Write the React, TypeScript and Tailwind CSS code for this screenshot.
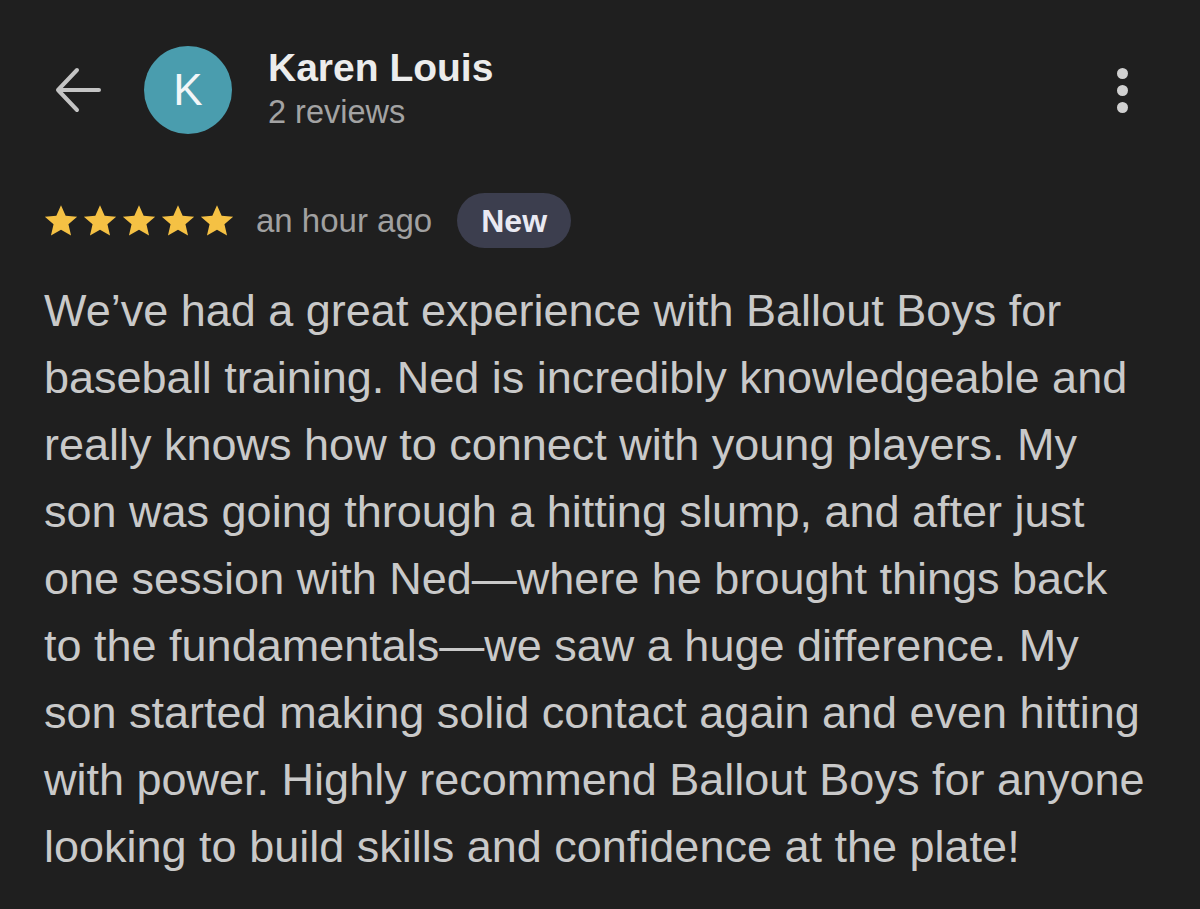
const reviewText =
  'We\u2019ve had a great experience with Ballout Boys for baseball training. Ned is incredibly knowledgeable and really knows how to connect with young players. My son was going through a hitting slump, and after just one session with Ned\u2014where he brought things back to the fundamentals\u2014we saw a huge difference. My son started making solid contact again and even hitting with power. Highly recommend Ballout Boys for anyone looking to build skills and confidence at the plate!';

function Star() {
  return (
    <svg className="w-[38px] h-[38px]" viewBox="0 0 24 24" fill="#f5c144">
      <path d="M12 2l2.95 6.7 7.25.62-5.5 4.78 1.65 7.1L12 17.45 5.65 21.2l1.65-7.1L1.8 9.32l7.25-.62z" />
    </svg>
  );
}

function BackArrow() {
  return (
    <svg className="w-[48px] h-[48px]" viewBox="0 0 48 48" fill="none" stroke="#c4c4c4" strokeWidth={4} strokeLinecap="round" strokeLinejoin="round">
      <path d="M45 24H4M23 4L4 24l19 20" />
    </svg>
  );
}

export default function App() {
  return (
    <div
      className="min-h-screen w-[1200px] h-[909px] bg-[#1f1f1f] overflow-hidden"
      style={{ fontFamily: '"Liberation Sans", Arial, sans-serif' }}
    >
      {/* Header */}
      <div className="flex items-center pl-[54px] pr-[72px] pt-[46px]">
        <BackArrow />
        <div className="ml-[42px] w-[88px] h-[88px] rounded-full bg-[#4a9dae] flex items-center justify-center text-[#f2f6f8] text-[44px]">
          K
        </div>
        <div className="ml-[36px] flex flex-col -mt-[2px]">
          <span className="text-[39px] font-bold text-[#ececec] leading-[46px]">Karen Louis</span>
          <span className="text-[32.5px] text-[#a3a3a3] leading-[42px]">2 reviews</span>
        </div>
        <div className="ml-auto flex flex-col gap-[6px]">
          <span className="w-[11px] h-[11px] rounded-full bg-[#d0d0d0]" />
          <span className="w-[11px] h-[11px] rounded-full bg-[#d0d0d0]" />
          <span className="w-[11px] h-[11px] rounded-full bg-[#d0d0d0]" />
        </div>
      </div>

      {/* Rating row */}
      <div className="flex items-center pl-[42px] mt-[59px]">
        <div className="flex gap-[1px]">
          <Star />
          <Star />
          <Star />
          <Star />
          <Star />
        </div>
        <span className="ml-[20px] text-[33px] text-[#a1a1a1]">an hour ago</span>
        <span className="ml-[25px] w-[114px] h-[55px] flex items-center justify-center rounded-full bg-[#3c3e4e] text-[32px] font-bold text-[#e9e9f2]">
          New
        </span>
      </div>

      {/* Body */}
      <p className="pl-[44px] pr-[44px] mt-[29px] text-[45px] leading-[67px] text-[#c9c9c9]">{reviewText}</p>
    </div>
  );
}
